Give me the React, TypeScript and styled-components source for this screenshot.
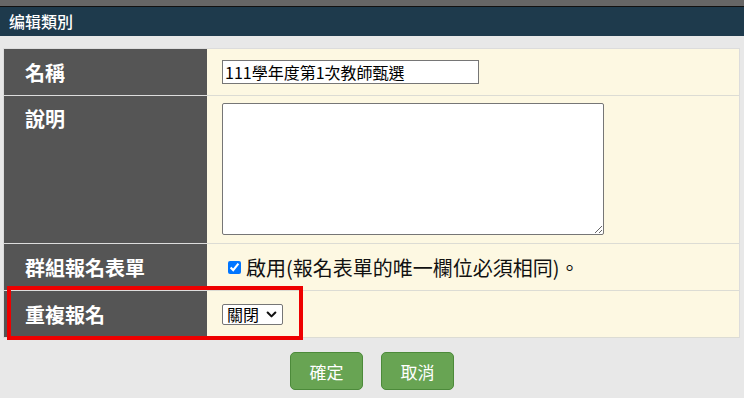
import { createGlobalStyle } from 'styled-components'
import styled from 'styled-components'

const GlobalStyle = createGlobalStyle`
  html, body {
    margin: 0;
    padding: 0;
    background: #e8e8e8;
    font-family: "Noto Sans CJK TC", "Noto Sans", sans-serif;
  }
`

const font = `"Noto Sans CJK TC", "Noto Sans CJK SC", "Liberation Sans", sans-serif`

type Field = {
  label: string
  tall?: boolean
  highlight?: boolean
  content: React.ReactNode
}

export default function App() {
  const fields: Field[] = [
    { label: '名稱', content: <TextInput defaultValue="111學年度第1次教師甄選" /> },
    { label: '說明', tall: true, content: <TextArea /> },
    {
      label: '群組報名表單',
      content: (
        <CheckLabel>
          <Check type="checkbox" defaultChecked />
          啟用(報名表單的唯一欄位必須相同)。
        </CheckLabel>
      ),
    },
    {
      label: '重複報名',
      highlight: true,
      content: (
        <SelectWrap>
          <Select defaultValue="off">
            <option value="off">關閉</option>
            <option value="on">開啟</option>
          </Select>
          <Chevron viewBox="0 0 10 10" aria-hidden>
            <path d="M1.5 3.2 L5 6.7 L8.5 3.2" />
          </Chevron>
        </SelectWrap>
      ),
    },
  ]

  return (
    <>
      <GlobalStyle />
      <TopStrip />
      <Header>编辑類別</Header>
      <Content>
        <FormTable>
          {fields.map((f) => (
            <Row key={f.label} $tall={f.tall}>
              <Label $tall={f.tall}>{f.label}</Label>
              <Value $tall={f.tall}>{f.content}</Value>
              {f.highlight && <Highlight />}
            </Row>
          ))}
        </FormTable>
        <Actions>
          <Button>確定</Button>
          <Button>取消</Button>
        </Actions>
      </Content>
    </>
  )
}

const TopStrip = styled.div`
  height: 6px;
  background: #666666;
  border-bottom: 1px solid #111111;
`

const Header = styled.div`
  height: 29px;
  background: #1e3a4c;
  color: #ffffff;
  font-family: "Noto Sans CJK SC", sans-serif;
  font-size: 16px;
  font-weight: 500;
  line-height: 29px;
  padding-left: 9px;
`

const Content = styled.div`
  padding: 12px 4px 0 3px;
`

const FormTable = styled.div`
  border: 1px solid #dcdcdc;
  border-bottom: none;
  background: #fdf8e2;
`

const Row = styled.div<{ $tall?: boolean }>`
  position: relative;
  display: grid;
  grid-template-columns: 203px 1fr;
  min-height: ${({ $tall }) => ($tall ? '147px' : '46px')};
  border-bottom: 1px solid #dcdcd4;
`

const Label = styled.div<{ $tall?: boolean }>`
  background: #555555;
  color: #ffffff;
  font-family: ${font};
  font-weight: 700;
  font-size: 20px;
  padding-left: 21px;
  display: flex;
  align-items: ${({ $tall }) => ($tall ? 'flex-start' : 'center')};
  padding-top: ${({ $tall }) => ($tall ? '8px' : '0')};
  border-bottom: 1px solid #dddddd;
  margin-bottom: -1px;
`

const Value = styled.div<{ $tall?: boolean }>`
  display: flex;
  align-items: ${({ $tall }) => ($tall ? 'flex-start' : 'center')};
  padding-left: 15px;
  padding-top: ${({ $tall }) => ($tall ? '7px' : '0')};
`

const TextInput = styled.input`
  box-sizing: border-box;
  width: 257px;
  height: 24px;
  border: 1px solid #767676;
  padding: 0 2px;
  font-family: ${font};
  font-size: 16px;
  color: #000000;
  background: #ffffff;
  outline: none;
`

const TextArea = styled.textarea`
  box-sizing: border-box;
  width: 382px;
  height: 132px;
  border: 1px solid #767676;
  border-radius: 2px;
  background: #ffffff;
  outline: none;
`

const CheckLabel = styled.label`
  display: flex;
  align-items: center;
  gap: 5px;
  font-family: ${font};
  font-size: 20px;
  color: #111111;
  padding-left: 6px;
`

const Check = styled.input`
  width: 13px;
  height: 13px;
  margin: 0;
  accent-color: #0075ff;
`

const SelectWrap = styled.div`
  position: relative;
  display: inline-flex;
`

const Select = styled.select`
  appearance: none;
  box-sizing: border-box;
  height: 21px;
  width: 61px;
  font-family: ${font};
  font-size: 16px;
  line-height: 19px;
  padding: 0 0 0 4px;
  border: 1px solid #767676;
  border-radius: 2px;
  background: #ffffff;
  color: #000000;
  outline: none;
`

const Chevron = styled.svg`
  position: absolute;
  right: 6px;
  top: 5px;
  width: 11px;
  height: 11px;
  pointer-events: none;
  fill: none;
  stroke: #111111;
  stroke-width: 1.9;
  stroke-linecap: round;
  stroke-linejoin: round;
`

const Highlight = styled.div`
  position: absolute;
  left: 3px;
  top: -5px;
  width: 296px;
  height: 54px;
  box-sizing: border-box;
  border: 4px solid #ee0000;
  pointer-events: none;
`

const Actions = styled.div`
  display: flex;
  justify-content: center;
  gap: 18px;
  padding-top: 14px;
  padding-left: 1px;
`

const Button = styled.button`
  width: 73px;
  height: 38px;
  background: #68a453;
  border: 1px solid #4c8a3a;
  border-radius: 5px;
  color: #ffffff;
  font-family: ${font};
  font-size: 17px;
  cursor: pointer;
`
